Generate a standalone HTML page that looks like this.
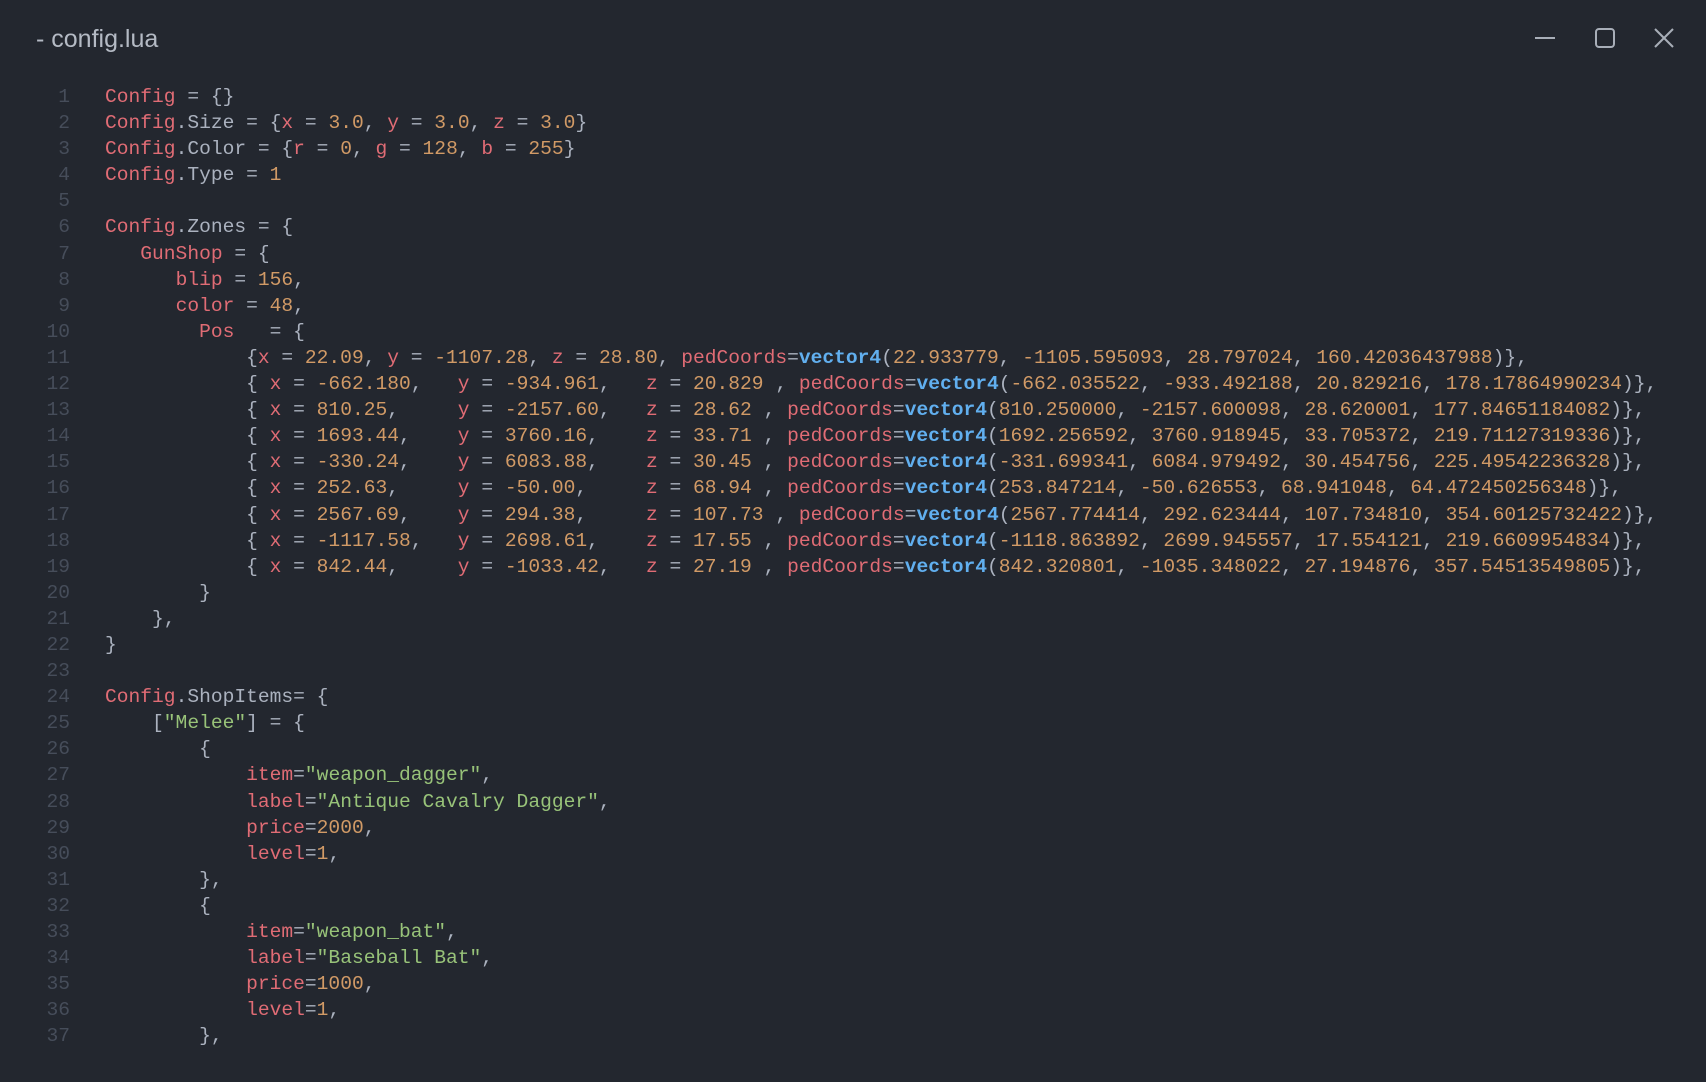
<!DOCTYPE html>
<html><head><meta charset="utf-8"><style>
html,body{margin:0;padding:0;background:#23272f;width:1706px;height:1082px;overflow:hidden}
.title{position:absolute;left:36px;top:25px;font:25px "Liberation Sans",sans-serif;color:#b4bac4}
.ctl{position:absolute;top:22px}
.code{position:absolute;left:0;top:84px;font:19.6px/26.1px "Liberation Mono",monospace;color:#abb2bf;white-space:pre}
.ln{display:inline-block;width:70px;text-align:right;color:#464d5a;margin-right:35px}
.r{color:#e06c75}.o{color:#d19a66}.g{color:#98c379}.b{color:#61afef;font-weight:bold}
</style></head><body>
<div class="title">- config.lua</div>
<svg class="ctl" style="left:1530px" width="160" height="36" viewBox="0 0 160 36">
<g stroke="#a8aeb8" stroke-width="2" fill="none">
<line x1="5" y1="16" x2="25" y2="16"/>
<rect x="66" y="7" width="18" height="18" rx="3"/>
<line x1="125" y1="7" x2="143" y2="25"/><line x1="143" y1="7" x2="125" y2="25"/>
</g></svg>
<div class="code"><span class="ln">1</span><span class="r">Config</span> = {}
<span class="ln">2</span><span class="r">Config</span>.Size = {<span class="r">x</span> = <span class="o">3.0</span>, <span class="r">y</span> = <span class="o">3.0</span>, <span class="r">z</span> = <span class="o">3.0</span>}
<span class="ln">3</span><span class="r">Config</span>.Color = {<span class="r">r</span> = <span class="o">0</span>, <span class="r">g</span> = <span class="o">128</span>, <span class="r">b</span> = <span class="o">255</span>}
<span class="ln">4</span><span class="r">Config</span>.Type = <span class="o">1</span>
<span class="ln">5</span>
<span class="ln">6</span><span class="r">Config</span>.Zones = {
<span class="ln">7</span>   <span class="r">GunShop</span> = {
<span class="ln">8</span>      <span class="r">blip</span> = <span class="o">156</span>,
<span class="ln">9</span>      <span class="r">color</span> = <span class="o">48</span>,
<span class="ln">10</span>        <span class="r">Pos</span>   = {
<span class="ln">11</span>            {<span class="r">x</span> = <span class="o">22.09</span>, <span class="r">y</span> = <span class="o">-1107.28</span>, <span class="r">z</span> = <span class="o">28.80</span>, <span class="r">pedCoords</span>=<span class="b">vector4</span>(<span class="o">22.933779</span>, <span class="o">-1105.595093</span>, <span class="o">28.797024</span>, <span class="o">160.42036437988</span>)},
<span class="ln">12</span>            { <span class="r">x</span> = <span class="o">-662.180</span>,   <span class="r">y</span> = <span class="o">-934.961</span>,   <span class="r">z</span> = <span class="o">20.829</span> , <span class="r">pedCoords</span>=<span class="b">vector4</span>(<span class="o">-662.035522</span>, <span class="o">-933.492188</span>, <span class="o">20.829216</span>, <span class="o">178.17864990234</span>)},
<span class="ln">13</span>            { <span class="r">x</span> = <span class="o">810.25</span>,     <span class="r">y</span> = <span class="o">-2157.60</span>,   <span class="r">z</span> = <span class="o">28.62</span> , <span class="r">pedCoords</span>=<span class="b">vector4</span>(<span class="o">810.250000</span>, <span class="o">-2157.600098</span>, <span class="o">28.620001</span>, <span class="o">177.84651184082</span>)},
<span class="ln">14</span>            { <span class="r">x</span> = <span class="o">1693.44</span>,    <span class="r">y</span> = <span class="o">3760.16</span>,    <span class="r">z</span> = <span class="o">33.71</span> , <span class="r">pedCoords</span>=<span class="b">vector4</span>(<span class="o">1692.256592</span>, <span class="o">3760.918945</span>, <span class="o">33.705372</span>, <span class="o">219.71127319336</span>)},
<span class="ln">15</span>            { <span class="r">x</span> = <span class="o">-330.24</span>,    <span class="r">y</span> = <span class="o">6083.88</span>,    <span class="r">z</span> = <span class="o">30.45</span> , <span class="r">pedCoords</span>=<span class="b">vector4</span>(<span class="o">-331.699341</span>, <span class="o">6084.979492</span>, <span class="o">30.454756</span>, <span class="o">225.49542236328</span>)},
<span class="ln">16</span>            { <span class="r">x</span> = <span class="o">252.63</span>,     <span class="r">y</span> = <span class="o">-50.00</span>,     <span class="r">z</span> = <span class="o">68.94</span> , <span class="r">pedCoords</span>=<span class="b">vector4</span>(<span class="o">253.847214</span>, <span class="o">-50.626553</span>, <span class="o">68.941048</span>, <span class="o">64.472450256348</span>)},
<span class="ln">17</span>            { <span class="r">x</span> = <span class="o">2567.69</span>,    <span class="r">y</span> = <span class="o">294.38</span>,     <span class="r">z</span> = <span class="o">107.73</span> , <span class="r">pedCoords</span>=<span class="b">vector4</span>(<span class="o">2567.774414</span>, <span class="o">292.623444</span>, <span class="o">107.734810</span>, <span class="o">354.60125732422</span>)},
<span class="ln">18</span>            { <span class="r">x</span> = <span class="o">-1117.58</span>,   <span class="r">y</span> = <span class="o">2698.61</span>,    <span class="r">z</span> = <span class="o">17.55</span> , <span class="r">pedCoords</span>=<span class="b">vector4</span>(<span class="o">-1118.863892</span>, <span class="o">2699.945557</span>, <span class="o">17.554121</span>, <span class="o">219.6609954834</span>)},
<span class="ln">19</span>            { <span class="r">x</span> = <span class="o">842.44</span>,     <span class="r">y</span> = <span class="o">-1033.42</span>,   <span class="r">z</span> = <span class="o">27.19</span> , <span class="r">pedCoords</span>=<span class="b">vector4</span>(<span class="o">842.320801</span>, <span class="o">-1035.348022</span>, <span class="o">27.194876</span>, <span class="o">357.54513549805</span>)},
<span class="ln">20</span>        }
<span class="ln">21</span>    },
<span class="ln">22</span>}
<span class="ln">23</span>
<span class="ln">24</span><span class="r">Config</span>.ShopItems= {
<span class="ln">25</span>    [<span class="g">"Melee"</span>] = {
<span class="ln">26</span>        {
<span class="ln">27</span>            <span class="r">item</span>=<span class="g">"weapon_dagger"</span>,
<span class="ln">28</span>            <span class="r">label</span>=<span class="g">"Antique Cavalry Dagger"</span>,
<span class="ln">29</span>            <span class="r">price</span>=<span class="o">2000</span>,
<span class="ln">30</span>            <span class="r">level</span>=<span class="o">1</span>,
<span class="ln">31</span>        },
<span class="ln">32</span>        {
<span class="ln">33</span>            <span class="r">item</span>=<span class="g">"weapon_bat"</span>,
<span class="ln">34</span>            <span class="r">label</span>=<span class="g">"Baseball Bat"</span>,
<span class="ln">35</span>            <span class="r">price</span>=<span class="o">1000</span>,
<span class="ln">36</span>            <span class="r">level</span>=<span class="o">1</span>,
<span class="ln">37</span>        },</div>
</body></html>
